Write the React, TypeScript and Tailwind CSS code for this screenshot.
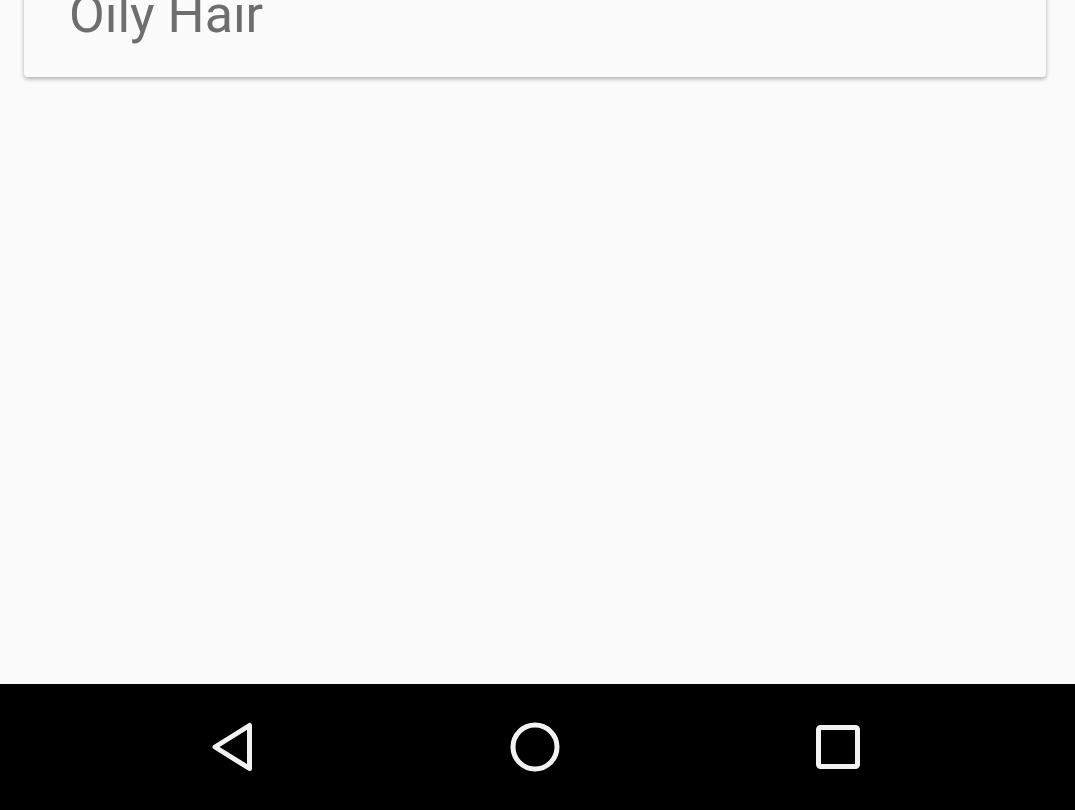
export default function App() {
  return (
    <div className="flex h-[810px] w-[1075px] flex-col overflow-hidden bg-[#fafafa] font-['Roboto',sans-serif]">
      <div className="flex-1">
        <div className="ml-6 mr-[29px] mt-[-60px] rounded-[4px] bg-[#fbfbfb] pl-[45px] pt-[49px] pb-[36px] shadow-[0_2px_4px_rgba(0,0,0,0.3)]">
          <div className="text-[52px] leading-[52px] text-[#6e6e6e]">Oily Hair</div>
        </div>
      </div>
      <div className="flex h-[126px] items-center gap-[243px] bg-black pl-[202px]">
        <svg width="60" height="60" viewBox="0 0 60 60" fill="none" stroke="#f2f2f2" strokeWidth="5" strokeLinejoin="round">
          <path d="M47.5 8.5 V51.5 L13 30 Z" />
        </svg>
        <svg width="60" height="60" viewBox="0 0 60 60" fill="none" stroke="#f2f2f2" strokeWidth="5">
          <circle cx="30" cy="30" r="22" />
        </svg>
        <svg width="60" height="60" viewBox="0 0 60 60" fill="none" stroke="#f2f2f2" strokeWidth="5">
          <rect x="10.5" y="10.5" width="39" height="39" rx="2" />
        </svg>
      </div>
    </div>
  );
}
